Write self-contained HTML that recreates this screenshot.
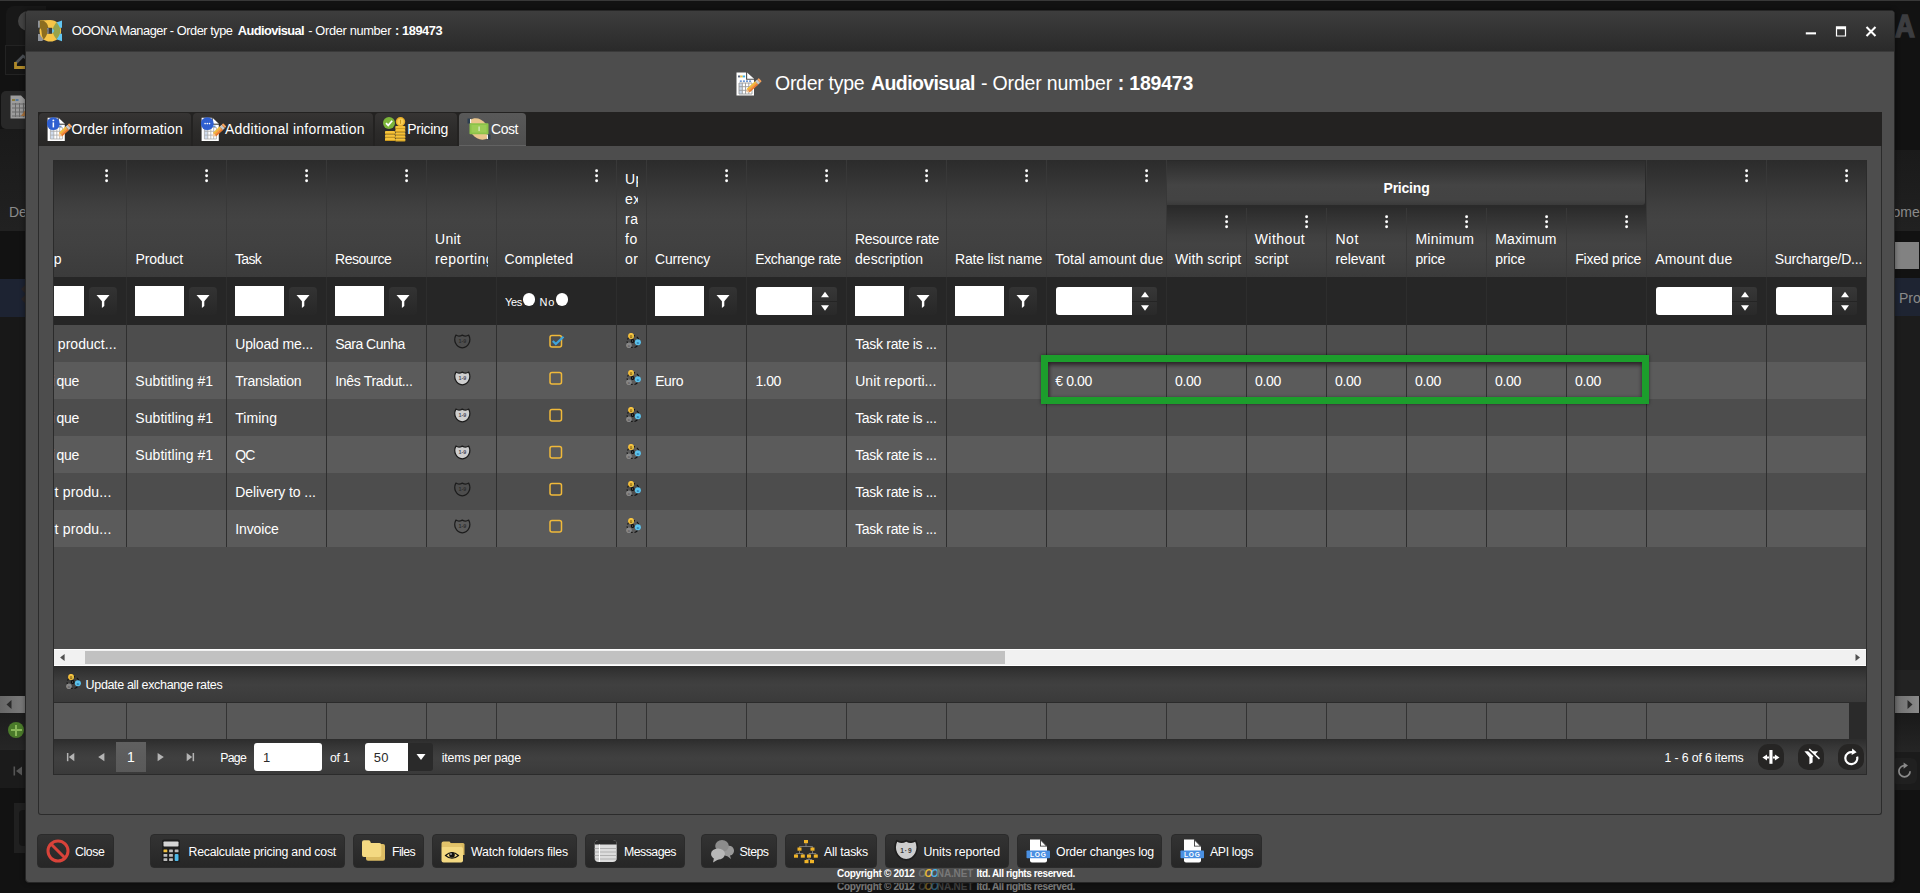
<!DOCTYPE html>
<html lang="en"><head><meta charset="utf-8"><title>OOONA Manager - Order type Audiovisual - Order number : 189473</title>
<style>
html,body{margin:0;padding:0}
body{width:1920px;height:893px;overflow:hidden;background:#121212;font-family:"Liberation Sans",sans-serif;color:#fff;position:relative}
div,span,svg{position:absolute;box-sizing:border-box}
.t{white-space:pre;line-height:20px}
.hd{background:linear-gradient(#2b2b2b,#363636 20%,#404040 40%,#434343 52%,#414141 72%,#3b3b3b)}
.btn{background:linear-gradient(#333,#262626);border:1px solid #2b2b2b;border-radius:4px}
.inp{background:#fff}
.fb{background:linear-gradient(#333,#272727);border-radius:4px;width:28px;height:28px}
</style></head>
<body>
<div style="left:0px;top:0px;width:1920px;height:1px;background:#383838"></div><div style="left:6px;top:6px;width:40px;height:39px;background:#181818;border-radius:8px 0 0 0"></div><div style="left:18px;top:11px;width:20px;height:20px;background:#444;border-radius:10px"></div><div style="left:5px;top:45px;width:40px;height:30px;background:#151515;border:1px solid #232323"></div><svg style="left:13px;top:53px" width="14" height="17"><path d="M2.5 10.5 L10 3 L14 6" stroke="#4c5055" stroke-width="2.6" fill="none"/><path d="M2.5 9 V14.5 H14" stroke="#b08a2a" stroke-width="2.8" fill="none"/></svg><div style="left:1px;top:91px;width:40px;height:38px;background:#282828;border-radius:5px 0 0 5px"></div><svg style="left:10px;top:95px" width="16" height="24"><path d="M0.5 0.5 H11 L16 5.5 V23.5 H0.5Z" fill="#9c9c9c"/><rect x="2" y="4" width="3" height="2" fill="#8a7a3a"/><rect x="5.5" y="4" width="3" height="2" fill="#55779a"/><path d="M2 9 H16 M2 13 H16 M2 17 H16 M2 21 H16 M5.5 8 V22 M9.5 8 V22 M13.5 8 V22" stroke="#6a6a6a" stroke-width="1"/><path d="M16 14 L11 21 L16 21Z" fill="#a8703a"/></svg><div style="left:0px;top:129px;width:26px;height:102px;background:linear-gradient(#1a1a1a,#212121)"></div><span class="t" style="left:9.00px;top:202.00px;font-size:14px;color:#8a8a8a;">De</span><div style="left:0px;top:279px;width:26px;height:38px;background:#1d2332"></div><svg style="left:20px;top:284px" width="6" height="26"><path d="M6 0 L1 5 L6 10Z M6 10 L1 15 L6 20Z" fill="#2a2526"/></svg><div style="left:0px;top:317px;width:26px;height:379px;background:#181818"></div><div style="left:0px;top:696px;width:26px;height:17px;background:linear-gradient(90deg,#666,#7c7c7c)"></div><svg style="left:5px;top:699px" width="8" height="11"><path d="M6.5 1 L1.5 5.5 L6.5 10Z" fill="#2a2a2a"/></svg><div style="left:0px;top:713px;width:26px;height:37px;background:linear-gradient(#1c1c1c,#262626)"></div><div style="left:8px;top:722px;width:16px;height:16px;background:#4a7a2a;border-radius:8px"></div><div style="left:10.5px;top:729px;width:11px;height:2px;background:#8ab85a"></div><div style="left:15px;top:724.5px;width:2px;height:11px;background:#8ab85a"></div><div style="left:0px;top:750px;width:26px;height:38px;background:#1b1b1b"></div><svg style="left:13px;top:766px" width="10" height="10"><rect x="0.5" y="0.5" width="1.6" height="9" fill="#555"/><path d="M9 0.5 L3 5 L9 9.5Z" fill="#555"/></svg><div style="left:14px;top:803px;width:20px;height:50px;background:#202020"></div><div style="left:19px;top:810px;width:20px;height:36px;background:#151515;border-radius:4px 0 0 4px"></div><span class="t" style="left:1894.50px;top:16.00px;font-size:32px;font-weight:700;color:#3c3d40;-webkit-text-stroke:1.6px #3c3d40;transform:scaleX(.86);transform-origin:0 0;">A</span><div style="left:1894px;top:150px;width:26px;height:81px;background:linear-gradient(#1a1a1a,#212121)"></div><span class="t" style="left:1892.50px;top:202.00px;font-size:14px;color:#8a8a8a;">ome</span><div style="left:1895px;top:242px;width:24px;height:27px;background:#828282"></div><div style="left:1894px;top:278px;width:26px;height:38px;background:#1e2432"></div><span class="t" style="left:1899.00px;top:288.00px;font-size:14px;color:#8a8a8a;">Pro</span><div style="left:1894px;top:316px;width:26px;height:380px;background:#1c1c1c"></div><div style="left:1894px;top:670px;width:26px;height:26px;background:#222"></div><div style="left:1895px;top:696px;width:24px;height:17px;background:linear-gradient(90deg,#6e6e6e,#8a8a8a)"></div><svg style="left:1906px;top:699px" width="8" height="11"><path d="M1.5 1 L6.5 5.5 L1.5 10Z" fill="#2a2a2a"/></svg><div style="left:1894px;top:713px;width:26px;height:39px;background:linear-gradient(#191919,#252525)"></div><div style="left:1894px;top:752px;width:26px;height:38px;background:#1b1b1b"></div><div style="left:1890px;top:758px;width:27px;height:26px;background:#202020;border-radius:6px"></div><svg style="left:1896px;top:762px" width="17" height="17"><path d="M8.5 3.6 A5.6 5.6 0 1 0 14.1 9.2" stroke="#8a8a8a" stroke-width="1.7" fill="none"/><path d="M7.6 0.4 L12 3.6 L7.6 6.8Z" fill="#8a8a8a"/></svg><span class="t" style="left:837.00px;top:876.50px;font-size:10px;font-weight:700;letter-spacing:-0.306px;opacity:0.45;">Copyright © 2012</span><span class="t" style="left:918.30px;top:876.50px;font-size:10px;font-weight:700;color:#777;letter-spacing:-1.548px;opacity:0.45;font-style:italic;"><span style="position:static;color:#6e6e6e">O</span><span style="position:static;color:#e8b93a">O</span><span style="position:static;color:#4db4e6">O</span></span><span class="t" style="left:936.80px;top:876.50px;font-size:10px;font-weight:700;color:#787878;letter-spacing:-0.139px;opacity:0.45;">NA.NET</span><span class="t" style="left:976.60px;top:876.50px;font-size:10px;font-weight:700;letter-spacing:-0.392px;opacity:0.45;">ltd. All rights reserved.</span><div style="left:25px;top:10px;width:1870px;height:873px;background:#4d4d4d;border:1px solid #262626;border-radius:4px;box-shadow:0 0 5px rgba(0,0,0,.45)"></div><div style="left:26px;top:11px;width:1868px;height:41px;background:linear-gradient(#3d3d3d,#2a2a2a);border-radius:3px 3px 0 0;border-bottom:1px solid #3a3a3a"></div><svg style="left:38px;top:19.9px" width="24.4" height="22"><rect x="0" y="0.7" width="3" height="7" fill="#8e939b"/><path d="M0 14 H3 L6 19.6 L4 21 H0Z" fill="#8e939b"/><circle cx="12.3" cy="10.8" r="10.8" fill="#f7c548"/><path d="M18.4 2.4 L24.3 0.3 V7.8 H21.4Z M21.4 13.8 H24.3 V21.3 L18.4 19.2Z" fill="#62c6f2"/><path d="M1.9 0.2 H12 V5 H1.9Z" fill="#f7c548"/><path d="M1.9 0.2 L5.5 0.5 Q11.8 4.8 9.9 10.8 Q8.6 16.8 5.6 19.6 Q3.4 16 3.4 10.8 Q3.4 9 1.9 8Z" fill="#8c6d1f"/><path d="M18.5 2.3 Q26 10.8 18.5 19.3 Q11 10.8 18.5 2.3Z" fill="#97a34b"/><rect x="9.3" y="7.8" width="4.9" height="6" fill="#3a3a3c"/><path d="M9.1 7.9 H10.6 V13.7 H9.1 Q9.9 10.8 9.1 7.9Z" fill="#8e939b"/><path d="M14.1 8.4 Q15.6 8.6 16.1 10.8 Q15.6 13 14.1 13.3Z" fill="#62c6f2"/></svg><span class="t" style="left:71.80px;top:20.50px;font-size:12.8px;letter-spacing:-0.466px;">OOONA Manager - Order type</span><span class="t" style="left:237.80px;top:20.50px;font-size:12.8px;font-weight:700;letter-spacing:-0.566px;">Audiovisual</span><span class="t" style="left:308.20px;top:20.50px;font-size:12.8px;letter-spacing:-0.327px;">- Order number</span><span class="t" style="left:395.00px;top:20.50px;font-size:12.8px;font-weight:700;letter-spacing:-0.416px;">: 189473</span><svg style="left:1805px;top:24.5px" width="12" height="12"><rect x="0.8" y="7.3" width="10.2" height="2.1" fill="#fff"/></svg><svg style="left:1835px;top:24.5px" width="12" height="12"><path d="M0.9 1.2 H11.1 V11.6 H0.9Z M2.1 4.2 V10.4 H9.9 V4.2Z" fill="#fff" fill-rule="evenodd"/></svg><svg style="left:1865px;top:24.5px" width="12" height="12"><path d="M1.5 1.9 L10.5 10.9 M10.5 1.9 L1.5 10.9" stroke="#fff" stroke-width="2.1" fill="none"/></svg><svg style="left:736px;top:72px" width="26" height="24"><path d="M0.5 0.5 H11 L18 6.8 V23.6 H0.5Z" fill="#fff"/><path d="M10.6 0 V7.2 H18.5" stroke="#4d4d4d" stroke-width="1.1" fill="none"/><rect x="2" y="3.5" width="2.3" height="1.9" fill="#5a6478"/><rect x="4.3" y="3.5" width="2.4" height="1.9" fill="#f0c040"/><rect x="6.7" y="3.5" width="2.4" height="1.9" fill="#3ab0e8"/><rect x="3.8" y="8.4" width="2" height="1.5" fill="#5a8ad0"/><rect x="6.9" y="8.4" width="2" height="1.5" fill="#5a8ad0"/><rect x="10" y="8.4" width="2" height="1.5" fill="#5a8ad0"/><rect x="13.1" y="8.4" width="2" height="1.5" fill="#5a8ad0"/><rect x="3" y="11" width="13" height="11" fill="#fff"/><rect x="3" y="11" width="3.3" height="11" fill="#c8d8ec"/><path d="M3 11 H16 V22 H3Z M3 14.7 H16 M3 18.3 H16 M6.3 11 V22 M9.5 11 V22 M12.8 11 V22" stroke="#9a9a9a" stroke-width="0.9" fill="none"/><g transform="translate(12.2,18.6) rotate(-42)"><rect x="0" y="-2.2" width="11.5" height="4.4" fill="#f39a4a"/><rect x="0" y="-2.2" width="11.5" height="1.5" fill="#f0c23c"/><rect x="0" y="0.9" width="11.5" height="1.3" fill="#e8762c"/><rect x="11.5" y="-2.2" width="2.6" height="4.4" fill="#c9c9c9"/><rect x="14.1" y="-2.2" width="2.2" height="4.4" rx="0.8" fill="#f6a25a"/><path d="M0 -2.2 L-2.6 0 L0 2.2Z" fill="#f3c79a"/></g></svg><span class="t" style="left:775.00px;top:73.00px;font-size:19.5px;letter-spacing:-0.273px;">Order type</span><span class="t" style="left:871.10px;top:73.00px;font-size:19.5px;font-weight:700;letter-spacing:-0.612px;">Audiovisual</span><span class="t" style="left:981.00px;top:73.00px;font-size:19.5px;letter-spacing:-0.164px;">- Order number</span><span class="t" style="left:1117.70px;top:73.00px;font-size:19.5px;font-weight:700;letter-spacing:-0.186px;">: 189473</span><div style="left:38px;top:112px;width:1844px;height:34px;background:#232221"></div><div style="left:39px;top:113px;width:152px;height:33px;background:linear-gradient(#363433,#2c2b2a 55%,#272625);border-radius:4px 4px 0 0"></div><svg style="left:47px;top:117px" width="26" height="25"><path d="M0.6 0.8 H11.5 L17.8 6.8 V24 H0.6Z" fill="#fff"/><path d="M11.2 0.3 V7.2 H18.2" stroke="#2e2d2c" stroke-width="1" fill="none"/><rect x="3.4" y="9" width="12" height="13" fill="#fff"/><rect x="3.4" y="9" width="3.4" height="13" fill="#cfdcee"/><rect x="10.5" y="8.6" width="4" height="1.6" fill="#6a9ad8"/><path d="M3.4 10.5 H15.4 V22 H3.4Z M3.4 14.3 H15.4 M3.4 18.1 H15.4 M6.8 10.5 V22 M9.8 10.5 V22 M12.7 10.5 V22" stroke="#a9a9a9" stroke-width="0.8" fill="none"/><g transform="translate(13.6,17.6) rotate(-43.5)"><rect x="0" y="-2.3" width="9.2" height="4.6" fill="#f39a4a"/><rect x="0" y="-2.3" width="9.2" height="1.6" fill="#f0c23c"/><rect x="0" y="0.9" width="9.2" height="1.4" fill="#e8762c"/><rect x="9.2" y="-2.3" width="2.6" height="4.6" fill="#c9c9c9"/><rect x="11.8" y="-2.3" width="2.2" height="4.6" rx="0.8" fill="#f6a25a"/><path d="M0 -2.3 L-2.6 0 L0 2.3Z" fill="#f3c79a"/></g><circle cx="6.3" cy="6.6" r="6.4" fill="#2f5fd0"/><rect x="5.6" y="5.4" width="1.5" height="5" fill="#fff"/><circle cx="6.35" cy="3.4" r="0.95" fill="#fff"/></svg><span class="t" style="left:71.50px;top:119.00px;font-size:14px;letter-spacing:0.151px;">Order information</span><div style="left:193px;top:113px;width:180px;height:33px;background:linear-gradient(#363433,#2c2b2a 55%,#272625);border-radius:4px 4px 0 0"></div><svg style="left:201px;top:117px" width="26" height="25"><path d="M0.6 0.8 H11.5 L17.8 6.8 V24 H0.6Z" fill="#fff"/><path d="M11.2 0.3 V7.2 H18.2" stroke="#2e2d2c" stroke-width="1" fill="none"/><rect x="3.4" y="9" width="12" height="13" fill="#fff"/><rect x="3.4" y="9" width="3.4" height="13" fill="#cfdcee"/><rect x="10.5" y="8.6" width="4" height="1.6" fill="#6a9ad8"/><path d="M3.4 10.5 H15.4 V22 H3.4Z M3.4 14.3 H15.4 M3.4 18.1 H15.4 M6.8 10.5 V22 M9.8 10.5 V22 M12.7 10.5 V22" stroke="#a9a9a9" stroke-width="0.8" fill="none"/><g transform="translate(13.6,17.6) rotate(-43.5)"><rect x="0" y="-2.3" width="9.2" height="4.6" fill="#f39a4a"/><rect x="0" y="-2.3" width="9.2" height="1.6" fill="#f0c23c"/><rect x="0" y="0.9" width="9.2" height="1.4" fill="#e8762c"/><rect x="9.2" y="-2.3" width="2.6" height="4.6" fill="#c9c9c9"/><rect x="11.8" y="-2.3" width="2.2" height="4.6" rx="0.8" fill="#f6a25a"/><path d="M0 -2.3 L-2.6 0 L0 2.3Z" fill="#f3c79a"/></g><circle cx="6.3" cy="6.6" r="6.4" fill="#2f5fd0"/><circle cx="4.1" cy="6.6" r="0.8" fill="#fff"/><circle cx="6.3" cy="6.6" r="0.8" fill="#fff"/><circle cx="8.5" cy="6.6" r="0.8" fill="#fff"/></svg><span class="t" style="left:225.00px;top:119.00px;font-size:14px;letter-spacing:0.230px;">Additional information</span><div style="left:375px;top:113px;width:82px;height:33px;background:linear-gradient(#363433,#2c2b2a 55%,#272625);border-radius:4px 4px 0 0"></div><svg style="left:383px;top:117px" width="24" height="25"><rect x="2" y="14" width="10" height="3.2" rx="0.8" fill="#f5c33b"/><rect x="2" y="16.3" width="10" height="0.9" fill="#c9971c"/><rect x="2" y="17.4" width="10" height="3.2" rx="0.8" fill="#f5c33b"/><rect x="2" y="19.7" width="10" height="0.9" fill="#c9971c"/><rect x="2" y="20.8" width="10" height="3.2" rx="0.8" fill="#f5c33b"/><rect x="2" y="23.1" width="10" height="0.9" fill="#c9971c"/><rect x="12.3" y="9" width="10" height="2.9" rx="0.8" fill="#f5c33b"/><rect x="12.3" y="11.1" width="10" height="0.8" fill="#c9971c"/><rect x="12.3" y="12.1" width="10" height="2.9" rx="0.8" fill="#f5c33b"/><rect x="12.3" y="14.2" width="10" height="0.8" fill="#c9971c"/><rect x="12.3" y="15.2" width="10" height="2.9" rx="0.8" fill="#f5c33b"/><rect x="12.3" y="17.3" width="10" height="0.8" fill="#c9971c"/><rect x="12.3" y="18.3" width="10" height="2.9" rx="0.8" fill="#f5c33b"/><rect x="12.3" y="20.4" width="10" height="0.8" fill="#c9971c"/><rect x="12.3" y="21.4" width="10" height="2.9" rx="0.8" fill="#f5c33b"/><rect x="12.3" y="23.5" width="10" height="0.8" fill="#c9971c"/><circle cx="17.5" cy="4.8" r="4.7" fill="#e8ae28"/><circle cx="17.5" cy="4.8" r="3.2" fill="#f7cf55"/><rect x="17" y="2.8" width="1" height="4" fill="#c9971c"/><circle cx="6" cy="6" r="6" fill="#7cb53a"/><path d="M3 6.2 L5.2 8.4 L9.2 3.8" stroke="#fff" stroke-width="1.7" fill="none"/></svg><span class="t" style="left:407.30px;top:119.00px;font-size:14px;letter-spacing:-0.300px;">Pricing</span><div style="left:459px;top:113px;width:67px;height:33px;background:linear-gradient(#595959,#4f4f4f);border-radius:4px 4px 0 0;border-bottom:1px solid #626262"></div><svg style="left:467px;top:118px" width="24" height="22"><path d="M3 2 C8 -1 14 0 19 6 L17 9 L5 8Z" fill="#e9c58c"/><path d="M21 20 C16 23 10 22 5 16 L7 13 L19 14Z" fill="#e9c58c"/><rect x="0.5" y="0.5" width="2.6" height="5" fill="#2c3e50"/><rect x="3.1" y="1" width="1" height="4.5" fill="#fff"/><rect x="20.9" y="16.5" width="2.6" height="5" fill="#2c3e50"/><rect x="19.9" y="16.5" width="1" height="4.5" fill="#fff"/><rect x="2.5" y="5.3" width="19" height="11" rx="0.8" fill="#8bc34a"/><rect x="4.5" y="7" width="15" height="7.6" fill="#9ccc55"/><rect x="11.5" y="8.5" width="1.2" height="4.6" fill="#dcedc8"/></svg><span class="t" style="left:491.00px;top:119.00px;font-size:14px;letter-spacing:-0.449px;">Cost</span><div style="left:38px;top:146px;width:1844px;height:669px;border:1px solid #2b2b2b;border-top:none;background:#4d4d4d;border-radius:0 0 3px 3px"></div><div class="hd" style="left:53px;top:160px;width:1813px;height:117px;"></div><div style="left:1166px;top:160px;width:480px;height:48px;background:#2a2a2a"></div><div style="left:1167px;top:161px;width:478px;height:44px;background:linear-gradient(#2d2d2d,#444 55%,#434343 88%,#3a3a3a);border-radius:0 0 3px 0"></div><div class="hd" style="left:1167px;top:208px;width:479px;height:69px;"></div><span class="t" style="left:1383.50px;top:178.00px;font-size:14px;font-weight:700;letter-spacing:-0.210px;">Pricing</span><div style="left:126px;top:160px;width:1px;height:117px;background:#383838"></div><div style="left:226px;top:160px;width:1px;height:117px;background:#383838"></div><div style="left:326px;top:160px;width:1px;height:117px;background:#383838"></div><div style="left:426px;top:160px;width:1px;height:117px;background:#383838"></div><div style="left:496px;top:160px;width:1px;height:117px;background:#383838"></div><div style="left:616px;top:160px;width:1px;height:117px;background:#383838"></div><div style="left:646px;top:160px;width:1px;height:117px;background:#383838"></div><div style="left:746px;top:160px;width:1px;height:117px;background:#383838"></div><div style="left:846px;top:160px;width:1px;height:117px;background:#383838"></div><div style="left:946px;top:160px;width:1px;height:117px;background:#383838"></div><div style="left:1046px;top:160px;width:1px;height:117px;background:#383838"></div><div style="left:1166px;top:160px;width:1px;height:117px;background:#383838"></div><div style="left:1246px;top:208px;width:1px;height:69px;background:#383838"></div><div style="left:1326px;top:208px;width:1px;height:69px;background:#383838"></div><div style="left:1406px;top:208px;width:1px;height:69px;background:#383838"></div><div style="left:1486px;top:208px;width:1px;height:69px;background:#383838"></div><div style="left:1566px;top:208px;width:1px;height:69px;background:#383838"></div><div style="left:1646px;top:160px;width:1px;height:117px;background:#383838"></div><div style="left:1766px;top:160px;width:1px;height:117px;background:#383838"></div><svg style="left:105px;top:168.6px" width="4" height="14"><circle cx="1.6" cy="1.8" r="1.45" fill="#fff"/><circle cx="1.6" cy="6.8" r="1.45" fill="#fff"/><circle cx="1.6" cy="11.8" r="1.45" fill="#fff"/></svg><svg style="left:205px;top:168.6px" width="4" height="14"><circle cx="1.6" cy="1.8" r="1.45" fill="#fff"/><circle cx="1.6" cy="6.8" r="1.45" fill="#fff"/><circle cx="1.6" cy="11.8" r="1.45" fill="#fff"/></svg><svg style="left:305px;top:168.6px" width="4" height="14"><circle cx="1.6" cy="1.8" r="1.45" fill="#fff"/><circle cx="1.6" cy="6.8" r="1.45" fill="#fff"/><circle cx="1.6" cy="11.8" r="1.45" fill="#fff"/></svg><svg style="left:405px;top:168.6px" width="4" height="14"><circle cx="1.6" cy="1.8" r="1.45" fill="#fff"/><circle cx="1.6" cy="6.8" r="1.45" fill="#fff"/><circle cx="1.6" cy="11.8" r="1.45" fill="#fff"/></svg><svg style="left:595px;top:168.6px" width="4" height="14"><circle cx="1.6" cy="1.8" r="1.45" fill="#fff"/><circle cx="1.6" cy="6.8" r="1.45" fill="#fff"/><circle cx="1.6" cy="11.8" r="1.45" fill="#fff"/></svg><svg style="left:725px;top:168.6px" width="4" height="14"><circle cx="1.6" cy="1.8" r="1.45" fill="#fff"/><circle cx="1.6" cy="6.8" r="1.45" fill="#fff"/><circle cx="1.6" cy="11.8" r="1.45" fill="#fff"/></svg><svg style="left:825px;top:168.6px" width="4" height="14"><circle cx="1.6" cy="1.8" r="1.45" fill="#fff"/><circle cx="1.6" cy="6.8" r="1.45" fill="#fff"/><circle cx="1.6" cy="11.8" r="1.45" fill="#fff"/></svg><svg style="left:925px;top:168.6px" width="4" height="14"><circle cx="1.6" cy="1.8" r="1.45" fill="#fff"/><circle cx="1.6" cy="6.8" r="1.45" fill="#fff"/><circle cx="1.6" cy="11.8" r="1.45" fill="#fff"/></svg><svg style="left:1025px;top:168.6px" width="4" height="14"><circle cx="1.6" cy="1.8" r="1.45" fill="#fff"/><circle cx="1.6" cy="6.8" r="1.45" fill="#fff"/><circle cx="1.6" cy="11.8" r="1.45" fill="#fff"/></svg><svg style="left:1145px;top:168.6px" width="4" height="14"><circle cx="1.6" cy="1.8" r="1.45" fill="#fff"/><circle cx="1.6" cy="6.8" r="1.45" fill="#fff"/><circle cx="1.6" cy="11.8" r="1.45" fill="#fff"/></svg><svg style="left:1225px;top:215px" width="4" height="14"><circle cx="1.6" cy="1.8" r="1.45" fill="#fff"/><circle cx="1.6" cy="6.8" r="1.45" fill="#fff"/><circle cx="1.6" cy="11.8" r="1.45" fill="#fff"/></svg><svg style="left:1305px;top:215px" width="4" height="14"><circle cx="1.6" cy="1.8" r="1.45" fill="#fff"/><circle cx="1.6" cy="6.8" r="1.45" fill="#fff"/><circle cx="1.6" cy="11.8" r="1.45" fill="#fff"/></svg><svg style="left:1385px;top:215px" width="4" height="14"><circle cx="1.6" cy="1.8" r="1.45" fill="#fff"/><circle cx="1.6" cy="6.8" r="1.45" fill="#fff"/><circle cx="1.6" cy="11.8" r="1.45" fill="#fff"/></svg><svg style="left:1465px;top:215px" width="4" height="14"><circle cx="1.6" cy="1.8" r="1.45" fill="#fff"/><circle cx="1.6" cy="6.8" r="1.45" fill="#fff"/><circle cx="1.6" cy="11.8" r="1.45" fill="#fff"/></svg><svg style="left:1545px;top:215px" width="4" height="14"><circle cx="1.6" cy="1.8" r="1.45" fill="#fff"/><circle cx="1.6" cy="6.8" r="1.45" fill="#fff"/><circle cx="1.6" cy="11.8" r="1.45" fill="#fff"/></svg><svg style="left:1625px;top:215px" width="4" height="14"><circle cx="1.6" cy="1.8" r="1.45" fill="#fff"/><circle cx="1.6" cy="6.8" r="1.45" fill="#fff"/><circle cx="1.6" cy="11.8" r="1.45" fill="#fff"/></svg><svg style="left:1745px;top:168.6px" width="4" height="14"><circle cx="1.6" cy="1.8" r="1.45" fill="#fff"/><circle cx="1.6" cy="6.8" r="1.45" fill="#fff"/><circle cx="1.6" cy="11.8" r="1.45" fill="#fff"/></svg><svg style="left:1845px;top:168.6px" width="4" height="14"><circle cx="1.6" cy="1.8" r="1.45" fill="#fff"/><circle cx="1.6" cy="6.8" r="1.45" fill="#fff"/><circle cx="1.6" cy="11.8" r="1.45" fill="#fff"/></svg><span class="t" style="left:135.50px;top:249.00px;font-size:14px;letter-spacing:-0.107px;">Product</span><span class="t" style="left:235.00px;top:249.00px;font-size:14px;letter-spacing:-0.699px;">Task</span><span class="t" style="left:335.00px;top:249.00px;font-size:14px;letter-spacing:-0.453px;">Resource</span><span class="t" style="left:435.00px;top:229.00px;font-size:14px;letter-spacing:0.273px;">Unit</span><span class="t" style="left:504.50px;top:249.00px;font-size:14px;letter-spacing:0.089px;">Completed</span><span class="t" style="left:655.00px;top:249.00px;font-size:14px;letter-spacing:-0.225px;">Currency</span><span class="t" style="left:755.20px;top:249.00px;font-size:14px;letter-spacing:-0.346px;">Exchange rate</span><span class="t" style="left:855.00px;top:229.00px;font-size:14px;letter-spacing:-0.303px;">Resource rate</span><span class="t" style="left:855.00px;top:249.00px;font-size:14px;letter-spacing:0.045px;">description</span><span class="t" style="left:955.00px;top:249.00px;font-size:14px;letter-spacing:-0.177px;">Rate list name</span><span class="t" style="left:1055.20px;top:249.00px;font-size:14px;letter-spacing:0.043px;">Total amount due</span><span class="t" style="left:1175.00px;top:249.00px;font-size:14px;letter-spacing:0.087px;">With script</span><span class="t" style="left:1254.70px;top:229.00px;font-size:14px;letter-spacing:0.433px;">Without</span><span class="t" style="left:1254.70px;top:249.00px;font-size:14px;letter-spacing:0.041px;">script</span><span class="t" style="left:1335.40px;top:229.00px;font-size:14px;letter-spacing:0.601px;">Not</span><span class="t" style="left:1335.40px;top:249.00px;font-size:14px;letter-spacing:-0.052px;">relevant</span><span class="t" style="left:1415.40px;top:229.00px;font-size:14px;letter-spacing:0.288px;">Minimum</span><span class="t" style="left:1415.40px;top:249.00px;font-size:14px;letter-spacing:-0.092px;">price</span><span class="t" style="left:1495.30px;top:229.00px;font-size:14px;letter-spacing:0.075px;">Maximum</span><span class="t" style="left:1495.30px;top:249.00px;font-size:14px;letter-spacing:-0.092px;">price</span><span class="t" style="left:1575.30px;top:249.00px;font-size:14px;letter-spacing:-0.243px;">Fixed price</span><span class="t" style="left:1655.20px;top:249.00px;font-size:14px;letter-spacing:0.180px;">Amount due</span><span class="t" style="left:1774.80px;top:249.00px;font-size:14px;letter-spacing:-0.212px;">Surcharge/D...</span><span class="t" style="left:53.70px;top:249.00px;font-size:14px;letter-spacing:-0.197px;">p</span><div style="left:426px;top:160px;width:62px;height:117px;overflow:hidden"><span class="t" style="left:9.00px;top:89.00px;font-size:14px;letter-spacing:0.415px;">reporting</span></div><div style="left:616px;top:160px;width:22px;height:117px;overflow:hidden"><span class="t" style="left:9.00px;top:9.00px;font-size:14px;letter-spacing:.5px;">Update</span><span class="t" style="left:9.00px;top:29.00px;font-size:14px;letter-spacing:.5px;">exchange</span><span class="t" style="left:9.00px;top:49.00px;font-size:14px;letter-spacing:.5px;">rate</span><span class="t" style="left:9.00px;top:69.00px;font-size:14px;letter-spacing:.5px;">for</span><span class="t" style="left:9.00px;top:89.00px;font-size:14px;letter-spacing:.5px;">order</span></div><div style="left:53px;top:277px;width:1813px;height:48px;background:#262626"></div><div style="left:126px;top:277px;width:1px;height:48px;background:#2d2d2d"></div><div style="left:226px;top:277px;width:1px;height:48px;background:#2d2d2d"></div><div style="left:326px;top:277px;width:1px;height:48px;background:#2d2d2d"></div><div style="left:426px;top:277px;width:1px;height:48px;background:#2d2d2d"></div><div style="left:496px;top:277px;width:1px;height:48px;background:#2d2d2d"></div><div style="left:616px;top:277px;width:1px;height:48px;background:#2d2d2d"></div><div style="left:646px;top:277px;width:1px;height:48px;background:#2d2d2d"></div><div style="left:746px;top:277px;width:1px;height:48px;background:#2d2d2d"></div><div style="left:846px;top:277px;width:1px;height:48px;background:#2d2d2d"></div><div style="left:946px;top:277px;width:1px;height:48px;background:#2d2d2d"></div><div style="left:1046px;top:277px;width:1px;height:48px;background:#2d2d2d"></div><div style="left:1166px;top:277px;width:1px;height:48px;background:#2d2d2d"></div><div style="left:1246px;top:277px;width:1px;height:48px;background:#2d2d2d"></div><div style="left:1326px;top:277px;width:1px;height:48px;background:#2d2d2d"></div><div style="left:1406px;top:277px;width:1px;height:48px;background:#2d2d2d"></div><div style="left:1486px;top:277px;width:1px;height:48px;background:#2d2d2d"></div><div style="left:1566px;top:277px;width:1px;height:48px;background:#2d2d2d"></div><div style="left:1646px;top:277px;width:1px;height:48px;background:#2d2d2d"></div><div style="left:1766px;top:277px;width:1px;height:48px;background:#2d2d2d"></div><div class="inp" style="left:53px;top:286px;width:31px;height:30px;"></div><div class="fb" style="left:89px;top:287px;width:28px;height:28px;"><svg style="left:7px;top:7px" width="14" height="15"><path d="M0.5 1 H13.5 L8.3 7.2 V12 L5.9 14 V7.2Z" fill="#fff"/></svg></div><div class="inp" style="left:135px;top:286px;width:49px;height:30px;"></div><div class="fb" style="left:189px;top:287px;width:28px;height:28px;"><svg style="left:7px;top:7px" width="14" height="15"><path d="M0.5 1 H13.5 L8.3 7.2 V12 L5.9 14 V7.2Z" fill="#fff"/></svg></div><div class="inp" style="left:235px;top:286px;width:49px;height:30px;"></div><div class="fb" style="left:289px;top:287px;width:28px;height:28px;"><svg style="left:7px;top:7px" width="14" height="15"><path d="M0.5 1 H13.5 L8.3 7.2 V12 L5.9 14 V7.2Z" fill="#fff"/></svg></div><div class="inp" style="left:335px;top:286px;width:49px;height:30px;"></div><div class="fb" style="left:389px;top:287px;width:28px;height:28px;"><svg style="left:7px;top:7px" width="14" height="15"><path d="M0.5 1 H13.5 L8.3 7.2 V12 L5.9 14 V7.2Z" fill="#fff"/></svg></div><div class="inp" style="left:655px;top:286px;width:49px;height:30px;"></div><div class="fb" style="left:709px;top:287px;width:28px;height:28px;"><svg style="left:7px;top:7px" width="14" height="15"><path d="M0.5 1 H13.5 L8.3 7.2 V12 L5.9 14 V7.2Z" fill="#fff"/></svg></div><div class="inp" style="left:855px;top:286px;width:49px;height:30px;"></div><div class="fb" style="left:909px;top:287px;width:28px;height:28px;"><svg style="left:7px;top:7px" width="14" height="15"><path d="M0.5 1 H13.5 L8.3 7.2 V12 L5.9 14 V7.2Z" fill="#fff"/></svg></div><div class="inp" style="left:955px;top:286px;width:49px;height:30px;"></div><div class="fb" style="left:1009px;top:287px;width:28px;height:28px;"><svg style="left:7px;top:7px" width="14" height="15"><path d="M0.5 1 H13.5 L8.3 7.2 V12 L5.9 14 V7.2Z" fill="#fff"/></svg></div><div style="left:756px;top:287px;width:81px;height:28px;background:linear-gradient(#373737,#292929);border-radius:3px"></div><div style="left:756px;top:287px;width:56px;height:28px;background:#fff;border-radius:3px 0 0 3px"></div><div style="left:812px;top:301px;width:25px;height:1px;background:#242424"></div><svg style="left:819.5px;top:291px" width="10" height="20"><path d="M5 0.7 L9 6.2 H1Z M5 19.8 L9 14.3 H1Z" fill="#fff"/></svg><div style="left:1056px;top:287px;width:101px;height:28px;background:linear-gradient(#373737,#292929);border-radius:3px"></div><div style="left:1056px;top:287px;width:76px;height:28px;background:#fff;border-radius:3px 0 0 3px"></div><div style="left:1132px;top:301px;width:25px;height:1px;background:#242424"></div><svg style="left:1139.5px;top:291px" width="10" height="20"><path d="M5 0.7 L9 6.2 H1Z M5 19.8 L9 14.3 H1Z" fill="#fff"/></svg><div style="left:1656px;top:287px;width:101px;height:28px;background:linear-gradient(#373737,#292929);border-radius:3px"></div><div style="left:1656px;top:287px;width:76px;height:28px;background:#fff;border-radius:3px 0 0 3px"></div><div style="left:1732px;top:301px;width:25px;height:1px;background:#242424"></div><svg style="left:1739.5px;top:291px" width="10" height="20"><path d="M5 0.7 L9 6.2 H1Z M5 19.8 L9 14.3 H1Z" fill="#fff"/></svg><div style="left:1776px;top:287px;width:81px;height:28px;background:linear-gradient(#373737,#292929);border-radius:3px"></div><div style="left:1776px;top:287px;width:56px;height:28px;background:#fff;border-radius:3px 0 0 3px"></div><div style="left:1832px;top:301px;width:25px;height:1px;background:#242424"></div><svg style="left:1839.5px;top:291px" width="10" height="20"><path d="M5 0.7 L9 6.2 H1Z M5 19.8 L9 14.3 H1Z" fill="#fff"/></svg><span class="t" style="left:505.00px;top:292.00px;font-size:11px;letter-spacing:-0.318px;">Yes</span><div style="left:523px;top:293px;width:12px;height:12.6px;background:#fff;border-radius:6.3px"></div><span class="t" style="left:539.50px;top:292.00px;font-size:11px;letter-spacing:0.719px;">No</span><div style="left:556px;top:293px;width:12px;height:12.6px;background:#fff;border-radius:6.3px"></div><span class="t" style="left:57.80px;top:334.00px;font-size:14px;letter-spacing:0.042px;">product...</span><span class="t" style="left:235.20px;top:334.00px;font-size:14px;letter-spacing:-0.131px;">Upload me...</span><span class="t" style="left:335.20px;top:334.00px;font-size:14px;letter-spacing:-0.512px;">Sara Cunha</span><svg style="left:453.7px;top:333.6px" width="17" height="15"><path d="M1.9 1.1 Q4.9 3.1 8.3 1.1 Q11.7 3.1 14.7 1.1 C17.6 6.6 14.6 13.3 8.3 13.9 C2 13.3 -1 6.6 1.9 1.1Z" fill="none" stroke="#1c1c1c" stroke-width="1.25" stroke-linejoin="round"/><text x="8.3" y="9" font-size="5.4" font-weight="700" text-anchor="middle" fill="#2e2e2e" font-family="Liberation Sans, sans-serif">1-9</text></svg><svg style="left:549px;top:333.5px" width="16" height="15"><rect x="1" y="1.5" width="11.5" height="11.5" rx="2" fill="none" stroke="#f0b93a" stroke-width="1.5"/><path d="M3.8 7 L6.8 10 L14.5 2.8" stroke="#3ea5dc" stroke-width="2.2" fill="none"/></svg><svg style="left:626px;top:332.7px" width="16" height="16"><circle cx="7.2" cy="8.6" r="6" fill="none" stroke="#101010" stroke-width="1.1" stroke-dasharray="3.4 2" stroke-dashoffset="1"/><circle cx="6.6" cy="8" r="1.35" fill="#666" stroke="#0a0a0a" stroke-width="1.1"/><circle cx="5.05" cy="2.9" r="3" fill="#f5c341"/><circle cx="11.9" cy="9.3" r="3" fill="#5cc3ee"/><circle cx="2.95" cy="12.3" r="2.8" fill="#878787"/><text x="5.1" y="4.5" font-size="4.4" font-weight="700" text-anchor="middle" fill="#6a4d00" font-family="Liberation Sans, sans-serif">0</text><text x="11.9" y="10.6" font-size="4.4" font-weight="700" text-anchor="middle" fill="#17638f" font-family="Liberation Sans, sans-serif">c</text><text x="2.95" y="13.6" font-size="4.4" font-weight="700" text-anchor="middle" fill="#5c5c5c" font-family="Liberation Sans, sans-serif">c</text></svg><span class="t" style="left:855.20px;top:334.00px;font-size:14px;letter-spacing:-0.316px;">Task rate is ...</span><div style="left:53px;top:362px;width:1813px;height:37px;background:#5b5b5b"></div><div style="left:53px;top:362px;width:20px;height:37px;overflow:hidden"><span class="t" style="left:-1.60px;top:9.00px;font-size:14px;">i</span></div><span class="t" style="left:56.50px;top:371.00px;font-size:14px;letter-spacing:-0.286px;">que</span><span class="t" style="left:135.30px;top:371.00px;font-size:14px;letter-spacing:0.064px;">Subtitling #1</span><span class="t" style="left:235.20px;top:371.00px;font-size:14px;letter-spacing:-0.241px;">Translation</span><span class="t" style="left:335.20px;top:371.00px;font-size:14px;letter-spacing:-0.316px;">Inês Tradut...</span><svg style="left:453.7px;top:370.6px" width="17" height="15"><path d="M1.9 1.1 Q4.9 3.1 8.3 1.1 Q11.7 3.1 14.7 1.1 C17.6 6.6 14.6 13.3 8.3 13.9 C2 13.3 -1 6.6 1.9 1.1Z" fill="#cfcfcf" stroke="#1c1c1c" stroke-width="1.25" stroke-linejoin="round"/><text x="8.3" y="9" font-size="5.4" font-weight="700" text-anchor="middle" fill="#4a4a5a" font-family="Liberation Sans, sans-serif">1-9</text></svg><svg style="left:549px;top:370.5px" width="16" height="15"><rect x="1" y="1.5" width="11.5" height="11.5" rx="2" fill="none" stroke="#f0b93a" stroke-width="1.5"/></svg><svg style="left:626px;top:369.7px" width="16" height="16"><circle cx="7.2" cy="8.6" r="6" fill="none" stroke="#101010" stroke-width="1.1" stroke-dasharray="3.4 2" stroke-dashoffset="1"/><circle cx="6.6" cy="8" r="1.35" fill="#666" stroke="#0a0a0a" stroke-width="1.1"/><circle cx="5.05" cy="2.9" r="3" fill="#f5c341"/><circle cx="11.9" cy="9.3" r="3" fill="#5cc3ee"/><circle cx="2.95" cy="12.3" r="2.8" fill="#878787"/><text x="5.1" y="4.5" font-size="4.4" font-weight="700" text-anchor="middle" fill="#6a4d00" font-family="Liberation Sans, sans-serif">0</text><text x="11.9" y="10.6" font-size="4.4" font-weight="700" text-anchor="middle" fill="#17638f" font-family="Liberation Sans, sans-serif">c</text><text x="2.95" y="13.6" font-size="4.4" font-weight="700" text-anchor="middle" fill="#5c5c5c" font-family="Liberation Sans, sans-serif">c</text></svg><span class="t" style="left:655.20px;top:371.00px;font-size:14px;letter-spacing:-0.445px;">Euro</span><span class="t" style="left:755.40px;top:371.00px;font-size:14px;letter-spacing:-0.412px;">1.00</span><span class="t" style="left:855.20px;top:371.00px;font-size:14px;letter-spacing:0.077px;">Unit reporti...</span><div style="left:53px;top:399px;width:20px;height:37px;overflow:hidden"><span class="t" style="left:-1.60px;top:9.00px;font-size:14px;">i</span></div><span class="t" style="left:56.50px;top:408.00px;font-size:14px;letter-spacing:-0.286px;">que</span><span class="t" style="left:135.30px;top:408.00px;font-size:14px;letter-spacing:0.064px;">Subtitling #1</span><span class="t" style="left:235.20px;top:408.00px;font-size:14px;letter-spacing:0.050px;">Timing</span><svg style="left:453.7px;top:407.6px" width="17" height="15"><path d="M1.9 1.1 Q4.9 3.1 8.3 1.1 Q11.7 3.1 14.7 1.1 C17.6 6.6 14.6 13.3 8.3 13.9 C2 13.3 -1 6.6 1.9 1.1Z" fill="#cfcfcf" stroke="#1c1c1c" stroke-width="1.25" stroke-linejoin="round"/><text x="8.3" y="9" font-size="5.4" font-weight="700" text-anchor="middle" fill="#4a4a5a" font-family="Liberation Sans, sans-serif">1-9</text></svg><svg style="left:549px;top:407.5px" width="16" height="15"><rect x="1" y="1.5" width="11.5" height="11.5" rx="2" fill="none" stroke="#f0b93a" stroke-width="1.5"/></svg><svg style="left:626px;top:406.7px" width="16" height="16"><circle cx="7.2" cy="8.6" r="6" fill="none" stroke="#101010" stroke-width="1.1" stroke-dasharray="3.4 2" stroke-dashoffset="1"/><circle cx="6.6" cy="8" r="1.35" fill="#666" stroke="#0a0a0a" stroke-width="1.1"/><circle cx="5.05" cy="2.9" r="3" fill="#f5c341"/><circle cx="11.9" cy="9.3" r="3" fill="#5cc3ee"/><circle cx="2.95" cy="12.3" r="2.8" fill="#878787"/><text x="5.1" y="4.5" font-size="4.4" font-weight="700" text-anchor="middle" fill="#6a4d00" font-family="Liberation Sans, sans-serif">0</text><text x="11.9" y="10.6" font-size="4.4" font-weight="700" text-anchor="middle" fill="#17638f" font-family="Liberation Sans, sans-serif">c</text><text x="2.95" y="13.6" font-size="4.4" font-weight="700" text-anchor="middle" fill="#5c5c5c" font-family="Liberation Sans, sans-serif">c</text></svg><span class="t" style="left:855.20px;top:408.00px;font-size:14px;letter-spacing:-0.316px;">Task rate is ...</span><div style="left:53px;top:436px;width:1813px;height:37px;background:#5b5b5b"></div><div style="left:53px;top:436px;width:20px;height:37px;overflow:hidden"><span class="t" style="left:-1.60px;top:9.00px;font-size:14px;">i</span></div><span class="t" style="left:56.50px;top:445.00px;font-size:14px;letter-spacing:-0.286px;">que</span><span class="t" style="left:135.30px;top:445.00px;font-size:14px;letter-spacing:0.064px;">Subtitling #1</span><span class="t" style="left:235.20px;top:445.00px;font-size:14px;letter-spacing:-0.950px;">QC</span><svg style="left:453.7px;top:444.6px" width="17" height="15"><path d="M1.9 1.1 Q4.9 3.1 8.3 1.1 Q11.7 3.1 14.7 1.1 C17.6 6.6 14.6 13.3 8.3 13.9 C2 13.3 -1 6.6 1.9 1.1Z" fill="#cfcfcf" stroke="#1c1c1c" stroke-width="1.25" stroke-linejoin="round"/><text x="8.3" y="9" font-size="5.4" font-weight="700" text-anchor="middle" fill="#4a4a5a" font-family="Liberation Sans, sans-serif">1-9</text></svg><svg style="left:549px;top:444.5px" width="16" height="15"><rect x="1" y="1.5" width="11.5" height="11.5" rx="2" fill="none" stroke="#f0b93a" stroke-width="1.5"/></svg><svg style="left:626px;top:443.7px" width="16" height="16"><circle cx="7.2" cy="8.6" r="6" fill="none" stroke="#101010" stroke-width="1.1" stroke-dasharray="3.4 2" stroke-dashoffset="1"/><circle cx="6.6" cy="8" r="1.35" fill="#666" stroke="#0a0a0a" stroke-width="1.1"/><circle cx="5.05" cy="2.9" r="3" fill="#f5c341"/><circle cx="11.9" cy="9.3" r="3" fill="#5cc3ee"/><circle cx="2.95" cy="12.3" r="2.8" fill="#878787"/><text x="5.1" y="4.5" font-size="4.4" font-weight="700" text-anchor="middle" fill="#6a4d00" font-family="Liberation Sans, sans-serif">0</text><text x="11.9" y="10.6" font-size="4.4" font-weight="700" text-anchor="middle" fill="#17638f" font-family="Liberation Sans, sans-serif">c</text><text x="2.95" y="13.6" font-size="4.4" font-weight="700" text-anchor="middle" fill="#5c5c5c" font-family="Liberation Sans, sans-serif">c</text></svg><span class="t" style="left:855.20px;top:445.00px;font-size:14px;letter-spacing:-0.316px;">Task rate is ...</span><div style="left:53px;top:473px;width:20px;height:37px;overflow:hidden"><span class="t" style="left:-6.30px;top:9.00px;font-size:14px;">s</span></div><span class="t" style="left:54.60px;top:482.00px;font-size:14px;letter-spacing:0.163px;">t produ...</span><span class="t" style="left:235.20px;top:482.00px;font-size:14px;letter-spacing:-0.074px;">Delivery to ...</span><svg style="left:453.7px;top:481.6px" width="17" height="15"><path d="M1.9 1.1 Q4.9 3.1 8.3 1.1 Q11.7 3.1 14.7 1.1 C17.6 6.6 14.6 13.3 8.3 13.9 C2 13.3 -1 6.6 1.9 1.1Z" fill="none" stroke="#1c1c1c" stroke-width="1.25" stroke-linejoin="round"/><text x="8.3" y="9" font-size="5.4" font-weight="700" text-anchor="middle" fill="#2e2e2e" font-family="Liberation Sans, sans-serif">1-9</text></svg><svg style="left:549px;top:481.5px" width="16" height="15"><rect x="1" y="1.5" width="11.5" height="11.5" rx="2" fill="none" stroke="#f0b93a" stroke-width="1.5"/></svg><svg style="left:626px;top:480.7px" width="16" height="16"><circle cx="7.2" cy="8.6" r="6" fill="none" stroke="#101010" stroke-width="1.1" stroke-dasharray="3.4 2" stroke-dashoffset="1"/><circle cx="6.6" cy="8" r="1.35" fill="#666" stroke="#0a0a0a" stroke-width="1.1"/><circle cx="5.05" cy="2.9" r="3" fill="#f5c341"/><circle cx="11.9" cy="9.3" r="3" fill="#5cc3ee"/><circle cx="2.95" cy="12.3" r="2.8" fill="#878787"/><text x="5.1" y="4.5" font-size="4.4" font-weight="700" text-anchor="middle" fill="#6a4d00" font-family="Liberation Sans, sans-serif">0</text><text x="11.9" y="10.6" font-size="4.4" font-weight="700" text-anchor="middle" fill="#17638f" font-family="Liberation Sans, sans-serif">c</text><text x="2.95" y="13.6" font-size="4.4" font-weight="700" text-anchor="middle" fill="#5c5c5c" font-family="Liberation Sans, sans-serif">c</text></svg><span class="t" style="left:855.20px;top:482.00px;font-size:14px;letter-spacing:-0.316px;">Task rate is ...</span><div style="left:53px;top:510px;width:1813px;height:37px;background:#5b5b5b"></div><div style="left:53px;top:510px;width:20px;height:37px;overflow:hidden"><span class="t" style="left:-6.30px;top:9.00px;font-size:14px;">s</span></div><span class="t" style="left:54.60px;top:519.00px;font-size:14px;letter-spacing:0.163px;">t produ...</span><span class="t" style="left:235.20px;top:519.00px;font-size:14px;letter-spacing:-0.108px;">Invoice</span><svg style="left:453.7px;top:518.6px" width="17" height="15"><path d="M1.9 1.1 Q4.9 3.1 8.3 1.1 Q11.7 3.1 14.7 1.1 C17.6 6.6 14.6 13.3 8.3 13.9 C2 13.3 -1 6.6 1.9 1.1Z" fill="none" stroke="#1c1c1c" stroke-width="1.25" stroke-linejoin="round"/><text x="8.3" y="9" font-size="5.4" font-weight="700" text-anchor="middle" fill="#2e2e2e" font-family="Liberation Sans, sans-serif">1-9</text></svg><svg style="left:549px;top:518.5px" width="16" height="15"><rect x="1" y="1.5" width="11.5" height="11.5" rx="2" fill="none" stroke="#f0b93a" stroke-width="1.5"/></svg><svg style="left:626px;top:517.7px" width="16" height="16"><circle cx="7.2" cy="8.6" r="6" fill="none" stroke="#101010" stroke-width="1.1" stroke-dasharray="3.4 2" stroke-dashoffset="1"/><circle cx="6.6" cy="8" r="1.35" fill="#666" stroke="#0a0a0a" stroke-width="1.1"/><circle cx="5.05" cy="2.9" r="3" fill="#f5c341"/><circle cx="11.9" cy="9.3" r="3" fill="#5cc3ee"/><circle cx="2.95" cy="12.3" r="2.8" fill="#878787"/><text x="5.1" y="4.5" font-size="4.4" font-weight="700" text-anchor="middle" fill="#6a4d00" font-family="Liberation Sans, sans-serif">0</text><text x="11.9" y="10.6" font-size="4.4" font-weight="700" text-anchor="middle" fill="#17638f" font-family="Liberation Sans, sans-serif">c</text><text x="2.95" y="13.6" font-size="4.4" font-weight="700" text-anchor="middle" fill="#5c5c5c" font-family="Liberation Sans, sans-serif">c</text></svg><span class="t" style="left:855.20px;top:519.00px;font-size:14px;letter-spacing:-0.316px;">Task rate is ...</span><div style="left:126px;top:325px;width:1px;height:222px;background:#2f2f2f"></div><div style="left:226px;top:325px;width:1px;height:222px;background:#2f2f2f"></div><div style="left:326px;top:325px;width:1px;height:222px;background:#2f2f2f"></div><div style="left:426px;top:325px;width:1px;height:222px;background:#2f2f2f"></div><div style="left:496px;top:325px;width:1px;height:222px;background:#2f2f2f"></div><div style="left:616px;top:325px;width:1px;height:222px;background:#2f2f2f"></div><div style="left:646px;top:325px;width:1px;height:222px;background:#2f2f2f"></div><div style="left:746px;top:325px;width:1px;height:222px;background:#2f2f2f"></div><div style="left:846px;top:325px;width:1px;height:222px;background:#2f2f2f"></div><div style="left:946px;top:325px;width:1px;height:222px;background:#2f2f2f"></div><div style="left:1046px;top:325px;width:1px;height:222px;background:#2f2f2f"></div><div style="left:1166px;top:325px;width:1px;height:222px;background:#2f2f2f"></div><div style="left:1246px;top:325px;width:1px;height:222px;background:#2f2f2f"></div><div style="left:1326px;top:325px;width:1px;height:222px;background:#2f2f2f"></div><div style="left:1406px;top:325px;width:1px;height:222px;background:#2f2f2f"></div><div style="left:1486px;top:325px;width:1px;height:222px;background:#2f2f2f"></div><div style="left:1566px;top:325px;width:1px;height:222px;background:#2f2f2f"></div><div style="left:1646px;top:325px;width:1px;height:222px;background:#2f2f2f"></div><div style="left:1766px;top:325px;width:1px;height:222px;background:#2f2f2f"></div><div style="left:1041px;top:355px;width:608px;height:49px;border:7px solid #1c9e2c;box-shadow:inset 0 3px 4px rgba(30,20,25,.75),inset 2px 0 3px rgba(30,20,25,.3),0 0 3px rgba(0,0,0,.5);background:#5b5b5b"></div><span class="t" style="left:1055.20px;top:371.00px;font-size:14px;letter-spacing:-0.356px;">€ 0.00</span><span class="t" style="left:1174.90px;top:371.00px;font-size:14px;letter-spacing:-0.288px;">0.00</span><div style="left:1166px;top:362px;width:1px;height:35px;background:#2f2f2f"></div><span class="t" style="left:1254.90px;top:371.00px;font-size:14px;letter-spacing:-0.288px;">0.00</span><div style="left:1246px;top:362px;width:1px;height:35px;background:#2f2f2f"></div><span class="t" style="left:1334.90px;top:371.00px;font-size:14px;letter-spacing:-0.288px;">0.00</span><div style="left:1326px;top:362px;width:1px;height:35px;background:#2f2f2f"></div><span class="t" style="left:1414.90px;top:371.00px;font-size:14px;letter-spacing:-0.288px;">0.00</span><div style="left:1406px;top:362px;width:1px;height:35px;background:#2f2f2f"></div><span class="t" style="left:1494.90px;top:371.00px;font-size:14px;letter-spacing:-0.288px;">0.00</span><div style="left:1486px;top:362px;width:1px;height:35px;background:#2f2f2f"></div><span class="t" style="left:1574.90px;top:371.00px;font-size:14px;letter-spacing:-0.288px;">0.00</span><div style="left:1566px;top:362px;width:1px;height:35px;background:#2f2f2f"></div><div style="left:53px;top:649px;width:1813px;height:17px;background:#f1f1f1;border-top:1px solid #fff;border-bottom:1px solid #fff"></div><div style="left:85px;top:651px;width:920px;height:13px;background:#c1c1c1"></div><svg style="left:58px;top:652px" width="10" height="11"><path d="M6.6 2 L2.1 5.5 L6.6 9Z" fill="#505050"/></svg><svg style="left:1853.4px;top:652px" width="10" height="11"><path d="M2.5 2 L7 5.5 L2.5 9Z" fill="#505050"/></svg><div style="left:53px;top:666px;width:1813px;height:37px;background:linear-gradient(#2b2b2b,#353535 20%,#3d3d3d 40%,#404040 52%,#3e3e3e 72%,#3a3a3a);border-bottom:1px solid #2b2b2b"></div><svg style="left:66px;top:673.5px" width="16" height="16"><circle cx="7.2" cy="8.6" r="6" fill="none" stroke="#101010" stroke-width="1.1" stroke-dasharray="3.4 2" stroke-dashoffset="1"/><circle cx="6.6" cy="8" r="1.35" fill="#666" stroke="#0a0a0a" stroke-width="1.1"/><circle cx="5.05" cy="2.9" r="3" fill="#f5c341"/><circle cx="11.9" cy="9.3" r="3" fill="#5cc3ee"/><circle cx="2.95" cy="12.3" r="2.8" fill="#878787"/><text x="5.1" y="4.5" font-size="4.4" font-weight="700" text-anchor="middle" fill="#6a4d00" font-family="Liberation Sans, sans-serif">0</text><text x="11.9" y="10.6" font-size="4.4" font-weight="700" text-anchor="middle" fill="#17638f" font-family="Liberation Sans, sans-serif">c</text><text x="2.95" y="13.6" font-size="4.4" font-weight="700" text-anchor="middle" fill="#5c5c5c" font-family="Liberation Sans, sans-serif">c</text></svg><span class="t" style="left:85.60px;top:675.00px;font-size:12.5px;letter-spacing:-0.341px;">Update all exchange rates</span><div style="left:53px;top:703px;width:1813px;height:36px;background:#2a2a2a"></div><div style="left:53px;top:703px;width:1796px;height:36px;background:#585858"></div><div style="left:126px;top:703px;width:1px;height:36px;background:#333"></div><div style="left:226px;top:703px;width:1px;height:36px;background:#333"></div><div style="left:326px;top:703px;width:1px;height:36px;background:#333"></div><div style="left:426px;top:703px;width:1px;height:36px;background:#333"></div><div style="left:496px;top:703px;width:1px;height:36px;background:#333"></div><div style="left:616px;top:703px;width:1px;height:36px;background:#333"></div><div style="left:646px;top:703px;width:1px;height:36px;background:#333"></div><div style="left:746px;top:703px;width:1px;height:36px;background:#333"></div><div style="left:846px;top:703px;width:1px;height:36px;background:#333"></div><div style="left:946px;top:703px;width:1px;height:36px;background:#333"></div><div style="left:1046px;top:703px;width:1px;height:36px;background:#333"></div><div style="left:1166px;top:703px;width:1px;height:36px;background:#333"></div><div style="left:1246px;top:703px;width:1px;height:36px;background:#333"></div><div style="left:1326px;top:703px;width:1px;height:36px;background:#333"></div><div style="left:1406px;top:703px;width:1px;height:36px;background:#333"></div><div style="left:1486px;top:703px;width:1px;height:36px;background:#333"></div><div style="left:1566px;top:703px;width:1px;height:36px;background:#333"></div><div style="left:1646px;top:703px;width:1px;height:36px;background:#333"></div><div style="left:1766px;top:703px;width:1px;height:36px;background:#333"></div><div style="left:53px;top:739px;width:1813px;height:36px;background:linear-gradient(#2c2c2c,#363636 20%,#3d3d3d 40%,#404040 55%,#3e3e3e 75%,#3a3a3a);border-bottom:1px solid #2b2b2b"></div><svg style="left:66px;top:752px" width="10" height="10"><rect x="0.9" y="1" width="1.5" height="8.2" fill="#b4b4b4"/><path d="M8.3 1 L2.8 5.1 L8.3 9.2Z" fill="#b4b4b4"/></svg><svg style="left:97px;top:752px" width="10" height="10"><path d="M7.4 1 L1.2 5.1 L7.4 9.2Z" fill="#b4b4b4"/></svg><svg style="left:155.2px;top:752px" width="10" height="10"><path d="M2.6 1 L8.8 5.1 L2.6 9.2Z" fill="#b4b4b4"/></svg><svg style="left:185.1px;top:752px" width="10" height="10"><rect x="7.6" y="1" width="1.5" height="8.2" fill="#b4b4b4"/><path d="M1.7 1 L7.2 5.1 L1.7 9.2Z" fill="#b4b4b4"/></svg><div style="left:116px;top:742px;width:30px;height:30px;background:linear-gradient(#606060,#595959)"></div><span class="t" style="left:127.00px;top:747.00px;font-size:14px;">1</span><span class="t" style="left:220.30px;top:748.00px;font-size:12.3px;letter-spacing:-0.755px;">Page</span><div style="left:254px;top:743px;width:68px;height:28px;background:#fff;border-radius:3px"></div><span class="t" style="left:263.00px;top:747.50px;font-size:13px;color:#2b2b2b;">1</span><span class="t" style="left:330.00px;top:748.00px;font-size:12.3px;letter-spacing:-0.229px;">of 1</span><div style="left:365px;top:743px;width:68px;height:28px;background:#2a2a2a;border-radius:3px"></div><div style="left:365px;top:743px;width:43px;height:28px;background:#fff;border-radius:3px 0 0 3px"></div><span class="t" style="left:373.70px;top:747.50px;font-size:13px;color:#2b2b2b;letter-spacing:0.416px;">50</span><svg style="left:416px;top:753px" width="10" height="8"><path d="M0.5 1 L9.5 1 L5 7Z" fill="#fff"/></svg><span class="t" style="left:441.70px;top:748.00px;font-size:12.3px;letter-spacing:-0.146px;">items per page</span><span class="t" style="left:1664.60px;top:748.00px;font-size:12.3px;letter-spacing:-0.153px;">1 - 6 of 6 items</span><div style="left:1758px;top:744px;width:26px;height:26px;background:#262524;border-radius:10px"></div><svg style="left:1761px;top:747px" width="20" height="20"><rect x="8.4" y="3" width="3.1" height="13.8" fill="#fff"/><path d="M1.4 10.5 L6 7.6 V9.5 H8 V11.5 H6 V13.4Z M18.5 10.5 L13.9 7.6 V9.5 H11.9 V11.5 H13.9 V13.4Z" fill="#fff"/></svg><div style="left:1798px;top:744px;width:26px;height:26px;background:#262524;border-radius:10px"></div><svg style="left:1801px;top:747px" width="20" height="20"><path d="M3.4 4.3 H17.1 L11.6 10.2 V15.6 L8.4 17.2 V10.2Z" fill="#fff"/><path d="M7 2.4 L17.4 12.6" stroke="#262524" stroke-width="2.2"/><path d="M8.2 2 L18.5 11.9" stroke="#fff" stroke-width="1.5"/></svg><div style="left:1838px;top:744px;width:26px;height:26px;background:#262524;border-radius:10px"></div><svg style="left:1841px;top:747px" width="20" height="20"><path d="M11.6 5.3 A6 6 0 1 0 16.1 9.6" stroke="#fff" stroke-width="2.2" fill="none"/><path d="M11.3 1.6 L15.6 5.2 L10.6 8Z" fill="#fff"/></svg><div style="left:53px;top:160px;width:1814px;height:615px;border:1px solid #2b2b2b;border-top:none"></div><div class="btn" style="left:37px;top:834px;width:77px;height:34px;"></div><svg style="left:46px;top:839px" width="24" height="24"><circle cx="12" cy="12" r="10" fill="none" stroke="#d9433a" stroke-width="3"/><path d="M5 5 L19 19" stroke="#d9433a" stroke-width="3"/></svg><span class="t" style="left:75.00px;top:842.00px;font-size:12.3px;letter-spacing:-0.391px;">Close</span><div class="btn" style="left:150px;top:834px;width:195px;height:34px;"></div><svg style="left:159px;top:839px" width="24" height="24"><rect x="3" y="0.5" width="18" height="23" rx="2" fill="#1e1e1e"/><rect x="4.5" y="2.5" width="15" height="5" rx="0.8" fill="#d4d4d4"/><rect x="4.5" y="10.5" width="3.8" height="2.8" rx="0.5" fill="#f0c040"/><rect x="10.1" y="10.5" width="3.8" height="2.8" rx="0.5" fill="#bdbdbd"/><rect x="15.7" y="10.5" width="3.8" height="2.8" rx="0.5" fill="#bdbdbd"/><rect x="4.5" y="14.9" width="3.8" height="2.8" rx="0.5" fill="#bdbdbd"/><rect x="10.1" y="14.9" width="3.8" height="2.8" rx="0.5" fill="#bdbdbd"/><rect x="4.5" y="19.3" width="3.8" height="2.8" rx="0.5" fill="#bdbdbd"/><rect x="10.1" y="19.3" width="3.8" height="2.8" rx="0.5" fill="#bdbdbd"/><rect x="15.7" y="14.9" width="3.8" height="7.2" rx="1" fill="#4db8e8"/></svg><span class="t" style="left:188.50px;top:842.00px;font-size:12.3px;letter-spacing:-0.225px;">Recalculate pricing and cost</span><div class="btn" style="left:353px;top:834px;width:71px;height:34px;"></div><svg style="left:362px;top:839px" width="24" height="24"><path d="M4 6.5 Q4 5 5.5 5 H21 Q23 5 23 7 V19.8 Q23 21.8 21 21.8 H6 Q4 21.8 4 19.8Z" fill="#dcbc63"/><path d="M0 3.2 Q0 1.3 1.9 1.3 H6.6 Q7.8 1.3 8.2 2.3 L8.9 4 H17.4 Q19.3 4 19.3 5.9 V16.1 Q19.3 18 17.4 18 H1.9 Q0 18 0 16.1Z" fill="#f4d982"/></svg><span class="t" style="left:392.00px;top:842.00px;font-size:12.3px;letter-spacing:-0.594px;">Files</span><div class="btn" style="left:432px;top:834px;width:145px;height:34px;"></div><svg style="left:441px;top:839px" width="24" height="24"><path d="M6 4 H22 Q23.5 4 23.5 5.5 V16 H6Z" fill="#d9b95f"/><path d="M0.5 4.5 Q0.5 2.5 2.5 2.5 H8.5 L10.5 5 H19 Q21 5 21 7 V9 H0.5Z" fill="#e2c36b"/><path d="M0.5 9.5 Q0.5 8 2 8 H20.5 Q22 8 22 9.5 V21.5 Q22 23.5 20 23.5 H2.5 Q0.5 23.5 0.5 21.5Z" fill="#f4d982"/><path d="M4.5 16.5 Q11 10.5 17.5 16.5 Q11 22 4.5 16.5Z" fill="#f4d982" stroke="#111" stroke-width="1.1"/><circle cx="11" cy="16" r="2.8" fill="#111"/><circle cx="10" cy="15" r="0.8" fill="#fff"/></svg><span class="t" style="left:471.00px;top:842.00px;font-size:12.3px;letter-spacing:-0.159px;">Watch folders files</span><div class="btn" style="left:585px;top:834px;width:100px;height:34px;"></div><svg style="left:594px;top:839px" width="24" height="24"><rect x="0.7" y="1" width="22" height="22" rx="4" fill="#dcdcdc"/><path d="M0.7 5.5 V5 Q0.7 1 4.7 1 H18.7 Q22.7 1 22.7 5 V5.5Z" fill="#2a2a2a"/><path d="M0.7 9.5 H22.7 M0.7 13 H22.7 M0.7 16.5 H22.7 M0.7 20 H22.7" stroke="#aaa" stroke-width="0.9"/><path d="M5.5 5.5 V23" stroke="#fff" stroke-width="1"/></svg><span class="t" style="left:624.00px;top:842.00px;font-size:12.3px;letter-spacing:-0.506px;">Messages</span><div class="btn" style="left:701px;top:834px;width:76px;height:34px;"></div><svg style="left:710px;top:839px" width="24" height="24"><path d="M13 12 a5.5 5 0 1 1 7 4.6 l1 3.4 l-3.6 -2.7 a5.5 5 0 0 1 -4.4 -5.3Z" fill="#9a9a9a"/><ellipse cx="12" cy="7" rx="6.8" ry="6" fill="#8c8c8c"/><path d="M8 11 L7 15 L12 12Z" fill="#8c8c8c"/><ellipse cx="8" cy="15" rx="7" ry="5.6" fill="#b8b8b8"/><path d="M4 19 L3 23.5 L9 20Z" fill="#b8b8b8"/></svg><span class="t" style="left:739.50px;top:842.00px;font-size:12.3px;letter-spacing:-0.491px;">Steps</span><div class="btn" style="left:785px;top:834px;width:92px;height:34px;"></div><svg style="left:794px;top:839px" width="24" height="25"><path d="M12 4 V7.5 M5.5 10 V7.5 H18.5 V10 M5.5 12 V14.5 M2 17 V14.5 H9 V17 M18.5 12 V14.5 M15 17 V14.5 H22 V17 M15 19 V20.5 M12.5 22 V20.5 H18 V22" stroke="#8a8a8a" stroke-width="0.8" fill="none"/><rect x="10" y="1" width="4" height="3.2" fill="#f0b428"/><rect x="3.5" y="8.5" width="4" height="3.2" fill="#f0b428"/><rect x="16.5" y="8.5" width="4" height="3.2" fill="#f0b428"/><rect x="0" y="15.5" width="4" height="3.2" fill="#f0b428"/><rect x="6.8" y="15.5" width="4" height="3.2" fill="#f0b428"/><rect x="13" y="15.5" width="4" height="3.2" fill="#f0b428"/><rect x="19.8" y="15.5" width="4" height="3.2" fill="#f0b428"/><rect x="10.5" y="21" width="4" height="3.2" fill="#f0b428"/><rect x="16" y="21" width="4" height="3.2" fill="#f0b428"/></svg><span class="t" style="left:824.00px;top:842.00px;font-size:12.3px;letter-spacing:-0.200px;">All tasks</span><div class="btn" style="left:885px;top:834px;width:123.5px;height:34px;"></div><svg style="left:893.6px;top:838.7px" width="26" height="23"><g transform="scale(1.47 1.5)"><path d="M1.9 1.1 Q4.9 3.1 8.3 1.1 Q11.7 3.1 14.7 1.1 C17.6 6.6 14.6 13.3 8.3 13.9 C2 13.3 -1 6.6 1.9 1.1Z" fill="#cdcdcd" stroke="#1e1e1e" stroke-width="1.15" stroke-linejoin="round"/></g><text x="12.4" y="13.6" font-size="6.6" font-weight="700" text-anchor="middle" fill="#3a3a3a" letter-spacing="1" font-family="Liberation Sans, sans-serif">1·9</text></svg><span class="t" style="left:923.50px;top:842.00px;font-size:12.3px;letter-spacing:-0.052px;">Units reported</span><div class="btn" style="left:1017px;top:834px;width:145px;height:34px;"></div><svg style="left:1026px;top:839px" width="25" height="24"><path d="M4 0.5 H14 L21 7.5 V21.5 Q21 23.5 19 23.5 H6 Q4 23.5 4 21.5Z" fill="#fff"/><path d="M14 0.5 V7.5 H21Z" fill="#2b2b2b"/><path d="M14.8 1.8 V6.7 H19.7Z" fill="#fff"/><rect x="0.5" y="11.5" width="23.5" height="7.8" rx="0.8" fill="#4a90e2"/><text x="12.3" y="17.9" font-size="6.6" font-weight="700" text-anchor="middle" fill="#fff" letter-spacing="0.7" font-family="Liberation Sans, sans-serif">LOG</text></svg><span class="t" style="left:1056.00px;top:842.00px;font-size:12.3px;letter-spacing:-0.187px;">Order changes log</span><div class="btn" style="left:1171px;top:834px;width:90.5px;height:34px;"></div><svg style="left:1180px;top:839px" width="25" height="24"><path d="M4 0.5 H14 L21 7.5 V21.5 Q21 23.5 19 23.5 H6 Q4 23.5 4 21.5Z" fill="#fff"/><path d="M14 0.5 V7.5 H21Z" fill="#2b2b2b"/><path d="M14.8 1.8 V6.7 H19.7Z" fill="#fff"/><rect x="0.5" y="11.5" width="23.5" height="7.8" rx="0.8" fill="#4a90e2"/><text x="12.3" y="17.9" font-size="6.6" font-weight="700" text-anchor="middle" fill="#fff" letter-spacing="0.7" font-family="Liberation Sans, sans-serif">LOG</text></svg><span class="t" style="left:1210.00px;top:842.00px;font-size:12.3px;letter-spacing:-0.350px;">API logs</span><span class="t" style="left:837.00px;top:863.50px;font-size:10px;font-weight:700;letter-spacing:-0.306px;">Copyright © 2012</span><span class="t" style="left:918.30px;top:863.50px;font-size:10px;font-weight:700;color:#777;letter-spacing:-1.548px;font-style:italic;"><span style="position:static;color:#6e6e6e">O</span><span style="position:static;color:#e8b93a">O</span><span style="position:static;color:#4db4e6">O</span></span><span class="t" style="left:936.80px;top:863.50px;font-size:10px;font-weight:700;color:#787878;letter-spacing:-0.139px;">NA.NET</span><span class="t" style="left:976.60px;top:863.50px;font-size:10px;font-weight:700;letter-spacing:-0.392px;">ltd. All rights reserved.</span>
</body></html>
